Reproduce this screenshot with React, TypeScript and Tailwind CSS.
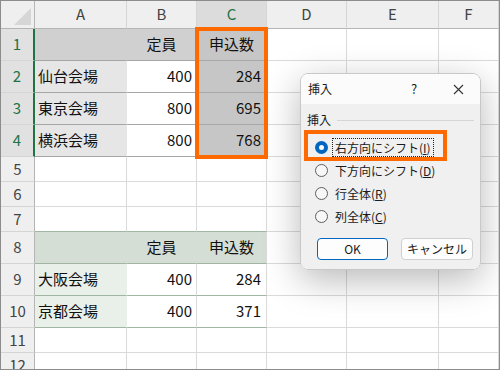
import React from "react";

const font = "font-['Noto_Sans_CJK_JP','Noto_Sans',sans-serif]";

type CellProps = {
  r?: string;
  b?: string;
  className?: string;
  children?: React.ReactNode;
};

// one spreadsheet cell; r / b are the right and bottom border colours
const Cell: React.FC<CellProps> = ({ r = "border-r-[#dadada]", b = "border-b-[#dadada]", className = "bg-white", children }) => (
  <div className={`border-r border-b ${r} ${b} flex items-center overflow-hidden whitespace-nowrap text-[15px] text-[#111] ${className}`}>
    {children}
  </div>
);

const RowHead: React.FC<{ n: number; sel?: boolean }> = ({ n, sel }) =>
  sel ? (
    <div className="border-r-2 border-b border-r-[#217346] border-b-[#d5d5d5] bg-[#e1e1e1] flex items-center justify-center text-[15px] text-[#217346]">
      {n}
    </div>
  ) : (
    <div className="border-r border-b border-r-[#b5b5b5] border-b-[#d5d5d5] bg-[#efefef] flex items-center justify-center text-[15px] text-[#444]">
      {n}
    </div>
  );

const ColHead: React.FC<{ label: string; sel?: boolean }> = ({ label, sel }) => (
  <div
    className={`border-r border-b border-r-[#d5d5d5] border-b-[#b5b5b5] flex items-center justify-center text-[15px] ${
      sel ? "bg-[#dcdcdc] text-[#217346]" : "bg-[#efefef] text-[#444]"
    }`}
  >
    {label}
  </div>
);

const Empty: React.FC = () => <Cell />;

const Radio: React.FC<{ checked?: boolean }> = ({ checked }) =>
  checked ? (
    <div className="w-[13px] h-[13px] rounded-full bg-[#0067c0] flex items-center justify-center shrink-0">
      <div className="w-[5px] h-[5px] rounded-full bg-white"></div>
    </div>
  ) : (
    <div className="w-[13px] h-[13px] rounded-full border border-[#5f5f5f] bg-[#f7f7f7] shrink-0"></div>
  );

export default function App() {
  const t1line = "border-b-[#a6a6a6]";
  const t2line = "border-b-[#a0b6a3]";

  return (
    <div className={`relative w-[500px] h-[370px] overflow-hidden border border-[#8c8c8c] bg-white ${font}`}>
      {/* sheet */}
      <div className="grid grid-cols-[34px_92px_70px_70px_80px_92px_60px] grid-rows-[28px_32px_32px_32px_32px_25px_25px_25px_32px_32px_32px_25px_25px]">
        {/* column headers */}
        <div className="border-r border-b border-r-[#b5b5b5] border-b-[#b5b5b5] bg-[#efefef]">
          <svg width="33" height="27" viewBox="0 0 33 27">
            <polygon points="13,24 30,24 30,7" fill="#d6d6d6" />
          </svg>
        </div>
        <ColHead label="A" />
        <ColHead label="B" />
        <ColHead label="C" sel />
        <ColHead label="D" />
        <ColHead label="E" />
        <ColHead label="F" />

        {/* row 1 */}
        <RowHead n={1} sel />
        <Cell r="border-r-[#d0d0d0]" b={t1line} className="bg-[#d0d0d0]" />
        <Cell r="border-r-[#d0d0d0]" b={t1line} className="bg-[#d0d0d0] justify-center">定員</Cell>
        <Cell r="border-r-[#c6c6c6]" b={t1line} className="bg-[#c6c6c6] justify-center">申込数</Cell>
        <Empty />
        <Empty />
        <Empty />

        {/* rows 2-4 */}
        {[
          { n: 2, name: "仙台会場", cap: "400", app: "284" },
          { n: 3, name: "東京会場", cap: "800", app: "695" },
          { n: 4, name: "横浜会場", cap: "800", app: "768" },
        ].map((row) => (
          <React.Fragment key={row.n}>
            <RowHead n={row.n} sel />
            <Cell r="border-r-[#e7e6e6]" b={t1line} className="bg-[#e7e6e6] pl-[3px]">{row.name}</Cell>
            <Cell b={t1line} className="bg-white justify-end pr-[4px]">{row.cap}</Cell>
            <Cell r="border-r-[#c6c6c6]" b={t1line} className="bg-[#c6c6c6] justify-end pr-[5px]">{row.app}</Cell>
            <Empty />
            <Empty />
            <Empty />
          </React.Fragment>
        ))}

        {/* rows 5-6 */}
        {[5, 6].map((n) => (
          <React.Fragment key={n}>
            <RowHead n={n} />
            <Empty />
            <Empty />
            <Empty />
            <Empty />
            <Empty />
            <Empty />
          </React.Fragment>
        ))}

        {/* row 7 */}
        <RowHead n={7} />
        <Cell b={t2line} />
        <Cell b={t2line} />
        <Cell b={t2line} />
        <Empty />
        <Empty />
        <Empty />

        {/* row 8 */}
        <RowHead n={8} />
        <Cell r="border-r-[#d4ded5]" b={t2line} className="bg-[#d4ded5]" />
        <Cell r="border-r-[#d4ded5]" b={t2line} className="bg-[#d4ded5] justify-center">定員</Cell>
        <Cell b={t2line} className="bg-[#d4ded5] justify-center">申込数</Cell>
        <Empty />
        <Empty />
        <Empty />

        {/* rows 9-10 */}
        {[
          { n: 9, name: "大阪会場", cap: "400", app: "284" },
          { n: 10, name: "京都会場", cap: "400", app: "371" },
        ].map((row) => (
          <React.Fragment key={row.n}>
            <RowHead n={row.n} />
            <Cell r="border-r-[#e9efe9]" b={t2line} className="bg-[#e9efe9] pl-[3px]">{row.name}</Cell>
            <Cell b={t2line} className="bg-white justify-end pr-[4px]">{row.cap}</Cell>
            <Cell b={t2line} className="bg-white justify-end pr-[5px]">{row.app}</Cell>
            <Empty />
            <Empty />
            <Empty />
          </React.Fragment>
        ))}

        {/* rows 11-12 */}
        {[11, 12].map((n) => (
          <React.Fragment key={n}>
            <RowHead n={n} />
            <Empty />
            <Empty />
            <Empty />
            <Empty />
            <Empty />
            <Empty />
          </React.Fragment>
        ))}
      </div>

      {/* orange highlight around C1:C4 */}
      <div className="absolute left-[194px] top-[26px] w-[73px] h-[132px] border-4 border-[#ff6a00]"></div>

      {/* insert dialog */}
      <div className="absolute left-[299px] top-[72px] w-[181px] h-[197px] rounded-[8px] border border-[#c8c8c8] overflow-hidden flex flex-col shadow-[0_10px_36px_rgba(0,0,0,0.28)] text-[12px] text-[#1a1a1a]">
        <div className="h-[30px] bg-[#fbfbfb] flex items-center pl-[7px] pr-[7px] shrink-0">
          <span className="flex-1">挿入</span>
          <span className="w-[30px] text-center mr-[14px] text-[13px]">?</span>
          <span className="w-[30px] flex justify-center">
            <svg width="11" height="11" viewBox="0 0 11 11">
              <path d="M1 1 L10 10 M10 1 L1 10" stroke="#333" strokeWidth="1.1" />
            </svg>
          </span>
        </div>
        <div className="flex-1 bg-[#f0f0f0] flex flex-col pt-[8px]">
          <div className="h-[16px] flex items-center pl-[6px] pr-[6px] gap-[6px]">
            <span>挿入</span>
            <div className="flex-1 h-px bg-[#d6d6d6]"></div>
          </div>
          <div className="mt-[8px] flex flex-col pl-[14px]">
            <div className="h-[23px] flex items-center gap-[5px]">
              <Radio checked />
              <span className="outline-1 outline-dotted outline-[#222] px-[2px] leading-[17px]">
                右方向にシフト(<span className="underline">I</span>)
              </span>
            </div>
            <div className="h-[23px] flex items-center gap-[7px]">
              <Radio />
              <span>
                下方向にシフト(<span className="underline">D</span>)
              </span>
            </div>
            <div className="h-[23px] flex items-center gap-[7px]">
              <Radio />
              <span>
                行全体(<span className="underline">R</span>)
              </span>
            </div>
            <div className="h-[23px] flex items-center gap-[7px]">
              <Radio />
              <span>
                列全体(<span className="underline">C</span>)
              </span>
            </div>
          </div>
          <div className="mt-[10px] flex pl-[16px] gap-[13px]">
            <div className="w-[71px] h-[22px] rounded-[4px] border border-[#0067c0] bg-[#fdfdfd] flex items-center justify-center">
              OK
            </div>
            <div className="w-[72px] h-[22px] rounded-[4px] border border-[#d0d0d0] bg-[#fdfdfd] flex items-center justify-center">
              キャンセル
            </div>
          </div>
        </div>
      </div>

      {/* orange highlight around first option */}
      <div className="absolute left-[303px] top-[129px] w-[143px] h-[31px] border-4 border-[#ff6a00]"></div>
    </div>
  );
}
